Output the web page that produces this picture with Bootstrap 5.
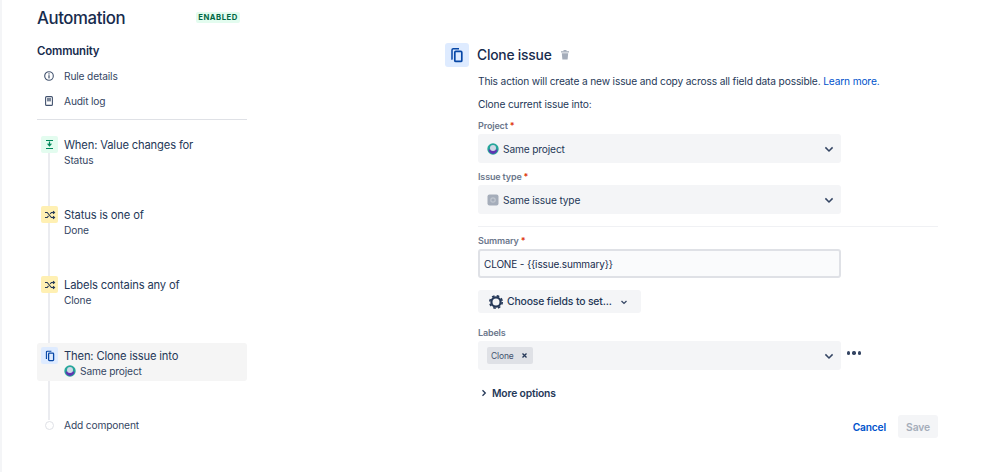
<!DOCTYPE html>
<html lang="en"><head><meta charset="utf-8"><title>Automation</title>
<link href="https://cdn.jsdelivr.net/npm/bootstrap@5.3.0/dist/css/bootstrap.min.css" rel="stylesheet">
<style>
html,body{height:100%;overflow:hidden}
body{font-family:Inter,"Liberation Sans",sans-serif;color:#253858;background:#fff;font-size:10.2px;line-height:14px;letter-spacing:-.15px}
.shell{width:998px;height:472px;border-left:2px solid #f4f5f7;padding:0 0 0 35px;gap:198px}
.leftcol{width:210px;flex:none}
.rightcol{width:493px;flex:none;padding-top:43px}
.apptitle{font-size:16.8px;font-weight:500;color:#172b4d;line-height:22px;margin:0;letter-spacing:-.4px}
.topbar{padding-top:7px;height:43px}
.stat{font-size:7.7px;font-weight:700;letter-spacing:.5px;line-height:11px;color:#006644;background:#e3fcef;border-radius:2px;padding:0 2px;width:44px;text-align:center;margin-right:7px;margin-top:5px}
.grp{font-size:11.4px;font-weight:600;color:#172b4d;line-height:16px;margin:0 0 4px;letter-spacing:-.15px}
.sideitem{height:25px;padding-left:6px;gap:9px;color:#344563}
.sideitem svg{flex:none;width:12px;height:12px}
.sep{border-top:1px solid #dfe1e6;margin:6px 0 0}
.flow{margin-top:16px;padding:0}
.flow::before{content:"";position:absolute;left:11px;top:16px;height:268px;width:2px;background:#ebecf0}
.step{height:70px;padding-left:4px;gap:6px}
.stepico{width:17px;height:17px;border-radius:2px;flex:none;position:relative}
.ig{background:#e3fcef}.iy{background:#fff0b3}.ib{background:#deebff}
.stepname{font-size:11.2px;line-height:18px;color:#253858;margin-top:0}
.stepsub{font-size:10.2px;line-height:14px;color:#344563;margin-top:-1px}
.chosen{position:relative;height:38px;padding-top:4px;background:#f5f5f5;border-radius:3px;margin-bottom:37px;margin-top:-3px}
.dotend{width:9px;height:9px;border:1px solid #dfe1e6;border-radius:50%;background:#fff;flex:none;margin:0 4px 0 4px;position:relative}
.addrow{padding-left:4px;gap:6px;height:14px;font-size:10.2px;color:#344563}
.bigico{width:24px;height:24px;background:#deebff;border-radius:3px;flex:none}
.hd{gap:8px;height:24px}
.hd h2{font-size:13.8px;font-weight:500;line-height:24px;margin:0;color:#172b4d;letter-spacing:-.2px}
.trash{margin-left:-1px}
.body{padding-left:33px}
.para{margin:7px 0 0;font-size:10.2px;line-height:14px;color:#253858}
.para a{color:#0052cc;text-decoration:none}
.para2{margin:9px 0 0}
.lbl{font-size:9px;font-weight:600;line-height:12px;color:#6b778c;display:block;margin:0 0 2px}
.lbl i{font-style:normal;color:#de350b;margin-left:2px}
.fld{margin-top:8px}
.first{margin-top:9px}
.lower{margin-top:14px}
.pick{width:363px;height:29px;background:#f4f5f7;border-radius:3px;padding:0 6px 0 9px;gap:4px;font-size:10.2px;color:#253858}
.pick svg.ch{margin-left:auto;flex:none}
.rule{border-top:1px solid #f0f1f4;margin:12px 0 8px}
.sumin{width:363px;height:29px;border:2px solid #dfe1e6;border-radius:3px;background:#fafbfc;padding:0 4px;font-size:10px;letter-spacing:-.15px;color:#172b4d;outline:0;font-family:inherit;display:block}
.choose{margin-top:12px;width:163px;height:23px;background:#f4f5f7;border:0;border-radius:3px;color:#253858;font-size:10.4px;letter-spacing:-.15px;font-weight:500;padding:0 0 0 10px;gap:3px;font-family:inherit}
.tag{background:#dfe1e6;border-radius:2px;height:17px;padding:0 5px 0 4px;font-size:8.5px;color:#42526e;gap:7px}
.more{margin-top:16px;gap:5px;font-size:10.3px;font-weight:600;color:#253858;height:14px;padding-left:3px}
.foot{margin-top:15px;gap:12px;height:23px}
.lnkbtn{color:#0052cc;font-weight:600;font-size:10.2px;text-decoration:none}
.savebtn{width:40px;height:23px;background:#f4f5f7;border:0;border-radius:3px;color:#a5adba;font-weight:600;font-size:10.3px;letter-spacing:-.15px;padding:0;font-family:inherit}
.dots{margin-left:6px;gap:2px;margin-top:-5px}
.dots span{width:3.3px;height:3.3px;border-radius:50%;background:#344563;display:block}
</style></head>
<body>
<div class="shell d-flex">
<div class="leftcol">
  <div class="topbar d-flex justify-content-between align-items-start">
    <h1 class="apptitle">Automation</h1><span class="stat">ENABLED</span>
  </div>
  <h3 class="grp">Community</h3>
  <div class="sideitem d-flex align-items-center"><svg viewBox="0 0 12 12"><circle cx="6" cy="6" r="4.3" fill="none" stroke="#42526e" stroke-width="1.1"/><rect x="5.4" y="5.2" width="1.2" height="3.2" fill="#42526e"/><rect x="5.4" y="3.3" width="1.2" height="1.2" fill="#42526e"/></svg><span>Rule details</span></div>
  <div class="sideitem d-flex align-items-center"><svg viewBox="0 0 12 12"><rect x="2.6" y="1.6" width="6.8" height="8.8" rx="1" fill="none" stroke="#42526e" stroke-width="1.1"/><rect x="4" y="3" width="4" height="3.4" fill="#7a869a"/></svg><span>Audit log</span></div>
  <div class="sep"></div>
  <div class="flow position-relative">
    <div class="step d-flex"><div class="stepico ig d-flex align-items-center justify-content-center"><svg width="11" height="11" viewBox="0 0 11 11"><path d="M2 1.5h7M2 9.5h7" stroke="#00875a" stroke-width="1.1"/><path d="M5.5 2.5v3.5M3.6 4.6l1.9 2.2 1.9-2.2" fill="none" stroke="#00875a" stroke-width="1.2"/></svg></div><div><div class="stepname">When: Value changes for</div><div class="stepsub">Status</div></div></div>
    <div class="step d-flex"><div class="stepico iy d-flex align-items-center justify-content-center"><svg width="12" height="12" viewBox="0 0 12 12"><path d="M1 3.5h2.2l4.2 5H10M1 8.5h2.2l1.3-1.6M6.2 5l1.2-1.5H10M9 2.2l1.5 1.3L9 4.8M9 7.2l1.5 1.3L9 9.8" fill="none" stroke="#253858" stroke-width="1.1"/></svg></div><div><div class="stepname">Status is one of</div><div class="stepsub">Done</div></div></div>
    <div class="step d-flex"><div class="stepico iy d-flex align-items-center justify-content-center"><svg width="12" height="12" viewBox="0 0 12 12"><path d="M1 3.5h2.2l4.2 5H10M1 8.5h2.2l1.3-1.6M6.2 5l1.2-1.5H10M9 2.2l1.5 1.3L9 4.8M9 7.2l1.5 1.3L9 9.8" fill="none" stroke="#253858" stroke-width="1.1"/></svg></div><div><div class="stepname">Labels contains any of</div><div class="stepsub">Clone</div></div></div>
    <div class="step chosen d-flex"><div class="stepico ib d-flex align-items-center justify-content-center"><svg width="12" height="12" viewBox="0 0 12 12"><path d="M3 8.5H2.4V2.2A1 1 0 0 1 3.4 1.2h4" fill="none" stroke="#0747a6" stroke-width="1.1"/><rect x="4.6" y="3.2" width="5" height="7.4" rx=".8" fill="none" stroke="#0747a6" stroke-width="1.3"/></svg></div><div><div class="stepname">Then: Clone issue into</div><div class="stepsub d-flex align-items-center gap-1"><svg width="12" height="12" viewBox="0 0 12 12"><circle cx="6" cy="6" r="5.7" fill="#26a69a"/><path d="M1.6 6.5h8.8a4.4 4.4 0 0 1-8.8 0z" fill="#5e35b1"/><circle cx="6" cy="5" r="3" fill="#cfd8e6"/></svg><span>Same project</span></div></div></div>
    <div class="addrow d-flex align-items-center"><span class="dotend"></span><span>Add component</span></div>
  </div>
</div>
<div class="rightcol">
  <div class="hd d-flex align-items-center">
    <div class="bigico d-flex align-items-center justify-content-center"><svg width="16" height="16" viewBox="0 0 16 16"><path d="M3.6 12H3V3A1.3 1.3 0 0 1 4.3 1.7H10" fill="none" stroke="#0747a6" stroke-width="1.5"/><rect x="5.8" y="4.4" width="7" height="10" rx="1" fill="none" stroke="#0747a6" stroke-width="1.7"/></svg></div>
    <h2>Clone issue</h2>
    <svg class="trash" width="12" height="12" viewBox="0 0 12 12"><rect x="2" y="2.2" width="8" height="1.3" fill="#a5adba"/><rect x="4.5" y="1" width="3" height="1.3" fill="#a5adba"/><path d="M2.8 4.2h6.4l-.6 6.3H3.4z" fill="#a5adba"/></svg>
  </div>
  <div class="body">
    <p class="para">This action will create a new issue and copy across all field data possible. <a href="#">Learn more.</a></p>
    <p class="para para2">Clone current issue into:</p>
    <div class="fld first"><label class="lbl">Project<i>*</i></label>
      <div class="pick d-flex align-items-center"><svg width="12" height="12" viewBox="0 0 12 12"><circle cx="6" cy="6" r="5.7" fill="#26a69a"/><path d="M1.6 6.5h8.8a4.4 4.4 0 0 1-8.8 0z" fill="#5e35b1"/><circle cx="6" cy="5" r="3" fill="#cfd8e6"/></svg><span>Same project</span><svg class="ch" width="12" height="12" viewBox="0 0 12 12"><path d="M2.4 4.4 6 8l3.6-3.6" fill="none" stroke="#344563" stroke-width="1.5"/></svg></div></div>
    <div class="fld"><label class="lbl">Issue type<i>*</i></label>
      <div class="pick d-flex align-items-center"><svg width="12" height="12" viewBox="0 0 12 12"><rect x=".5" y=".5" width="11" height="11" rx="2" fill="#a5adba"/><circle cx="6" cy="6" r="2.2" fill="none" stroke="#c1c7d0" stroke-width="1.2"/></svg><span>Same issue type</span><svg class="ch" width="12" height="12" viewBox="0 0 12 12"><path d="M2.4 4.4 6 8l3.6-3.6" fill="none" stroke="#344563" stroke-width="1.5"/></svg></div></div>
    <div class="rule"></div>
    <label class="lbl">Summary<i>*</i></label>
    <input class="sumin" type="text" value="CLONE - {{issue.summary}}">
    <button class="choose d-flex align-items-center" type="button"><svg width="16" height="16" viewBox="0 0 16 16"><circle cx="8" cy="8" r="4.6" fill="none" stroke="#253858" stroke-width="2.2"/><circle cx="8" cy="8" r="6.2" fill="none" stroke="#253858" stroke-width="1.6" stroke-dasharray="2.6 2.27"/></svg><span>Choose fields to set...</span><svg class="ms-1" width="10" height="10" viewBox="0 0 10 10"><path d="M2.5 4 5 6.4 7.5 4" fill="none" stroke="#344563" stroke-width="1.3"/></svg></button>
    <div class="fld lower"><label class="lbl">Labels</label>
      <div class="d-flex align-items-center">
      <div class="pick d-flex align-items-center"><span class="tag d-flex align-items-center"><span>Clone</span><svg width="7" height="7" viewBox="0 0 7 7"><path d="M1.5 1.5l4 4M5.5 1.5l-4 4" stroke="#253858" stroke-width="1.3"/></svg></span><svg class="ch" width="12" height="12" viewBox="0 0 12 12"><path d="M2.4 4.4 6 8l3.6-3.6" fill="none" stroke="#344563" stroke-width="1.5"/></svg></div>
      <div class="dots d-flex"><span></span><span></span><span></span></div>
      </div></div>
    <div class="more d-flex align-items-center"><svg width="6" height="8" viewBox="0 0 6 8"><path d="M1.5 1.2 4.3 4 1.5 6.8" fill="none" stroke="#253858" stroke-width="1.3"/></svg><span>More options</span></div>
    <div class="foot d-flex justify-content-end align-items-center"><a class="lnkbtn" href="#">Cancel</a><button class="savebtn" type="button">Save</button></div>
  </div>
</div>
</div>
<script src="https://cdn.jsdelivr.net/npm/bootstrap@5.3.0/dist/js/bootstrap.bundle.min.js"></script>
</body></html>
